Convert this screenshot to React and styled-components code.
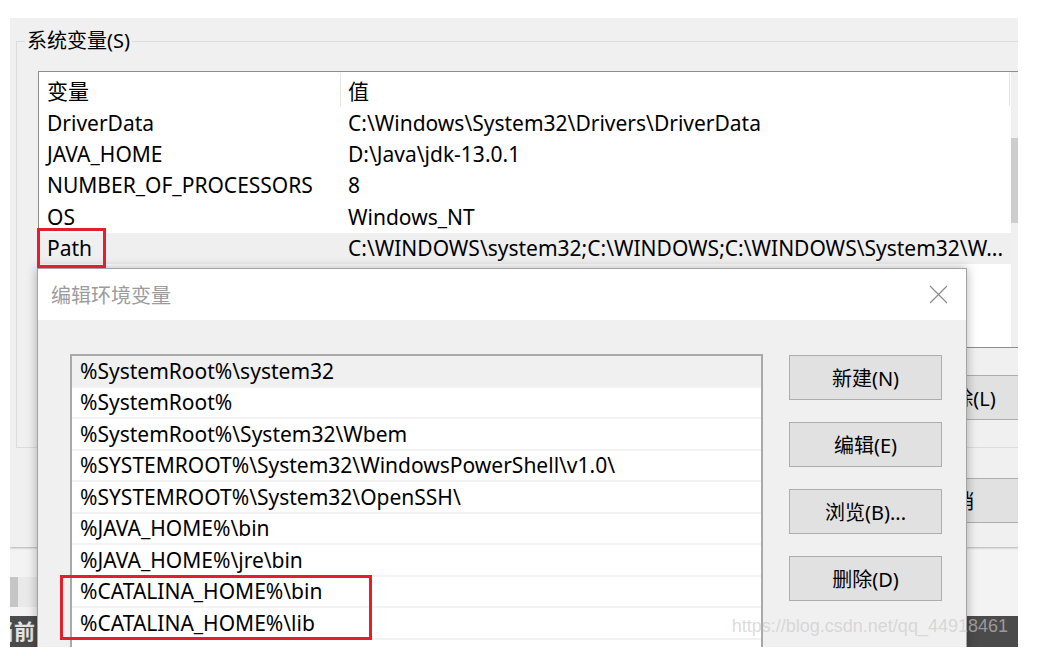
import React from 'react';
import styled, { createGlobalStyle } from 'styled-components';

const FONT = `"Noto Sans", "Noto Sans CJK SC", sans-serif`;

const GlobalStyle = createGlobalStyle`
  html, body {
    margin: 0;
    padding: 0;
    background: #fff;
  }
  body {
    font-family: ${FONT};
    color: #000;
  }
  * {
    box-sizing: border-box;
  }
`;

const systemVars = [
  ['DriverData', 'C:\\Windows\\System32\\Drivers\\DriverData'],
  ['JAVA_HOME', 'D:\\Java\\jdk-13.0.1'],
  ['NUMBER_OF_PROCESSORS', '8'],
  ['OS', 'Windows_NT'],
  ['Path', 'C:\\WINDOWS\\system32;C:\\WINDOWS;C:\\WINDOWS\\System32\\W...'],
];

const pathEntries = [
  '%SystemRoot%\\system32',
  '%SystemRoot%',
  '%SystemRoot%\\System32\\Wbem',
  '%SYSTEMROOT%\\System32\\WindowsPowerShell\\v1.0\\',
  '%SYSTEMROOT%\\System32\\OpenSSH\\',
  '%JAVA_HOME%\\bin',
  '%JAVA_HOME%\\jre\\bin',
  '%CATALINA_HOME%\\bin',
  '%CATALINA_HOME%\\lib',
];

export default function App() {
  return (
    <>
      <GlobalStyle />
      <Shot>
        <BackWindow>
          <GroupBox>
            <legend>系统变量(S)</legend>
            <VarList>
              <div className="table">
                <VarHeader>
                  <div>变量</div>
                  <div>值</div>
                </VarHeader>
                {systemVars.map(([name, value]) => (
                  <VarRow key={name} $selected={name === 'Path'}>
                    <div>{name}</div>
                    <div>{value}</div>
                  </VarRow>
                ))}
              </div>
              <ScrollTrack>
                <div className="thumb" />
              </ScrollTrack>
            </VarList>
            <ButtonRow>
              <WinButton>新建(W)...</WinButton>
              <WinButton>编辑(I)...</WinButton>
              <WinButton>删除(L)</WinButton>
            </ButtonRow>
          </GroupBox>
          <FooterRow>
            <WinButton>确定</WinButton>
            <WinButton>取消</WinButton>
          </FooterRow>
        </BackWindow>

        <Desktop>
          <SideBlock />
          <TaskBar>
            <span>当前</span>
          </TaskBar>
        </Desktop>

        <Dialog>
          <TitleBar>
            <span className="title">编辑环境变量</span>
            <svg width="19" height="19" viewBox="0 0 19 19">
              <path d="M1 1 L18 18 M18 1 L1 18" stroke="#8a8a8a" strokeWidth="1.1" fill="none" />
            </svg>
          </TitleBar>
          <DialogBody>
            <PathList>
              {pathEntries.map((entry, i) => (
                <PathRow key={entry} $selected={i === 0}>
                  {entry}
                </PathRow>
              ))}
            </PathList>
            <ButtonColumn>
              <WinButton>新建(N)</WinButton>
              <WinButton>编辑(E)</WinButton>
              <WinButton>浏览(B)...</WinButton>
              <WinButton>删除(D)</WinButton>
            </ButtonColumn>
          </DialogBody>
        </Dialog>

        <Marker $left={27} $top={210} $width={69} $height={40} />
        <Marker $left={50} $top={557} $width={312} $height={65} />
        <Watermark>https://blog.csdn.net/qq_44918461</Watermark>
      </Shot>
    </>
  );
}

const Shot = styled.div`
  position: relative;
  margin: 18px 0 0 10px;
  width: 1008px;
  height: 629px;
  overflow: hidden;
  background: #f3f3f3;
`;

const BackWindow = styled.div`
  position: relative;
  width: 1060px;
  height: 529px;
  padding: 10px 0 0 6px;
  background: #f0f0f0;
  box-shadow: 0 1px 2px rgba(0, 0, 0, 0.28);
  z-index: 1;
`;

const GroupBox = styled.fieldset`
  width: 1034px;
  margin: 0;
  padding: 0 8px 27px 8px;
  border: 1px solid #dcdcdc;

  legend {
    padding: 0 2px;
    font-size: 20px;
    line-height: 26px;
    color: #000;
  }
`;

const VarList = styled.div`
  display: grid;
  grid-template-columns: 1fr 17px;
  width: 991px;
  height: 277px;
  margin: 17px 0 0 13px;
  border: 1px solid #8d8d8d;
  background: #fff;
  overflow: hidden;

  .table {
    overflow: hidden;
  }
`;

const VarHeader = styled.div`
  display: grid;
  grid-template-columns: 302px 669px;
  height: 35px;
  font-size: 21px;

  div {
    display: flex;
    align-items: center;
    padding-left: 8px;
    border-right: 1px solid #e5e5e5;
    margin: 1px 0 1px;
  }
  div + div {
    padding-left: 7px;
  }
`;

const VarRow = styled.div`
  display: grid;
  grid-template-columns: 302px 1fr;
  height: 31.4px;
  font-size: 21px;
  background: ${(p) => (p.$selected ? '#efefef' : '#fff')};
  white-space: nowrap;

  div {
    display: flex;
    align-items: center;
    padding-left: 8px;
    overflow: hidden;
  }
  div + div {
    padding-left: 7px;
  }
`;

const ScrollTrack = styled.div`
  background: #f0f0f0;
  padding-top: 66px;

  .thumb {
    height: 85px;
    background: #cdcdcd;
  }
`;

const ButtonRow = styled.div`
  display: flex;
  justify-content: flex-end;
  gap: 10px;
  margin-top: 27px;
`;

const FooterRow = styled.div`
  display: flex;
  justify-content: flex-end;
  gap: 10px;
  margin-top: 30px;
  padding-right: 39px;
`;

const WinButton = styled.button`
  width: 153px;
  height: 45px;
  padding: 0;
  background: #e1e1e1;
  border: 1px solid #adadad;
  font-family: ${FONT};
  font-size: 20px;
  color: #000;
`;

const Desktop = styled.div`
  display: flex;
  flex-direction: column;
  height: 100px;
  padding-top: 30px;
`;

const SideBlock = styled.div`
  width: 27px;
  height: 30px;
  background: linear-gradient(to right, #c6c6c6 0 8px, #e9e9e9 8px);
`;

const TaskBar = styled.div`
  margin-top: auto;
  height: 31px;
  background: #4b4b4b;
  overflow: hidden;
  display: flex;
  align-items: center;

  span {
    margin-left: -17px;
    font-size: 21px;
    font-weight: bold;
    color: #e4e4e4;
    line-height: 1;
  }
`;

const Dialog = styled.section`
  position: absolute;
  left: 27px;
  top: 250px;
  width: 930px;
  height: 420px;
  background: #f0f0f0;
  border: 1px solid #a3a3a3;
  box-shadow: 0 0 10px rgba(0, 0, 0, 0.3);
  z-index: 2;
`;

const TitleBar = styled.div`
  display: flex;
  align-items: center;
  justify-content: space-between;
  height: 51px;
  padding: 0 18px 0 13px;
  background: #fff;

  .title {
    font-size: 20px;
    color: #9c9c9c;
  }
`;

const DialogBody = styled.div`
  display: flex;
  align-items: flex-start;
  gap: 26px;
  padding: 34px 0 0 32px;
`;

const PathList = styled.div`
  display: flex;
  flex-direction: column;
  width: 693px;
  height: 400px;
  border: 2px solid #a9a9a9;
  background: #fff;
`;

const PathRow = styled.div`
  display: flex;
  align-items: center;
  flex: none;
  height: 31.5px;
  padding-left: 8px;
  border-bottom: 2px solid #f3f3f3;
  font-size: 21px;
  white-space: nowrap;
  background: ${(p) => (p.$selected ? '#f0f0f0' : '#fff')};
`;

const ButtonColumn = styled.div`
  display: flex;
  flex-direction: column;
  gap: 22px;
  padding-top: 1px;
`;

const Marker = styled.div`
  position: absolute;
  left: ${(p) => p.$left}px;
  top: ${(p) => p.$top}px;
  width: ${(p) => p.$width}px;
  height: ${(p) => p.$height}px;
  border: 3px solid #e41f2d;
  z-index: 3;
`;

const Watermark = styled.div`
  position: absolute;
  right: 10px;
  top: 598px;
  line-height: 20px;
  font-family: "Liberation Sans", Arial, sans-serif;
  font-size: 18px;
  color: rgba(200, 200, 200, 0.65);
  z-index: 4;
`;
